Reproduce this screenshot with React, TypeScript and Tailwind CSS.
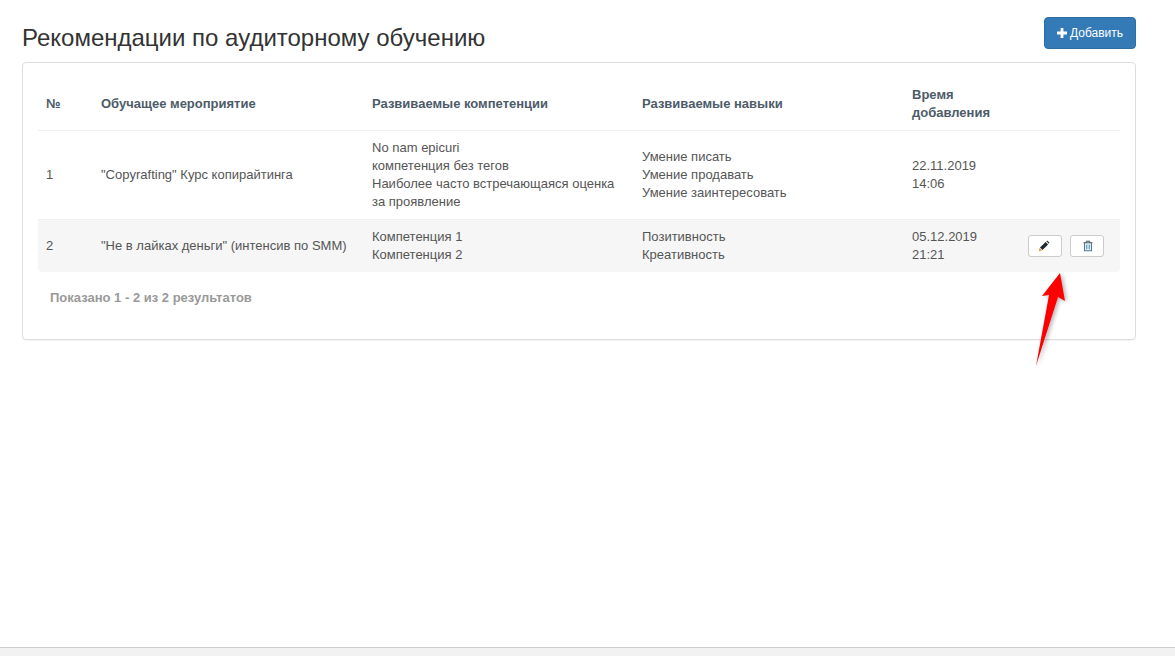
import React from "react";

function Pencil() {
  return (
    <svg className="mr-[3px]" width="12" height="12" viewBox="0 0 12 12">
      <path d="M0.8 11.2 L1.5 8 L4 10.5 Z" fill="#d99a2b" />
      <path d="M2 7.5 L7.6 1.9 L10.1 4.4 L4.5 10 Z" fill="#1f2a33" />
      <path d="M8.3 1.2 L9.2 0.5 L11.5 2.8 L10.8 3.7 Z" fill="#27333d" />
    </svg>
  );
}

function Trash() {
  return (
    <svg className="ml-[1px]" width="12" height="12" viewBox="0 0 12 12" fill="none">
      <path d="M1.5 2.8 H10.5 M4.3 2.8 V1.2 H7.7 V2.8" stroke="#46525c" strokeWidth="1" />
      <path d="M2.6 3 V10.8 H9.4 V3" stroke="#4b7894" strokeWidth="1.1" />
      <path d="M4.5 4.5 V9.4 M6 4.5 V9.4 M7.5 4.5 V9.4" stroke="#5f9fc0" strokeWidth="0.9" />
    </svg>
  );
}

const th = "font-bold text-[#4d5b69] text-[13px] leading-[18px] px-2 text-left align-middle";
const td = "text-[#555] text-[13px] leading-[18px] px-2 align-middle";

export default function App() {
  return (
    <div className="relative h-[656px] bg-white overflow-hidden flex flex-col font-['Liberation_Sans',Arial,sans-serif]">
      <div className="flex-1 pl-[22px] w-[1136px]">
        <div className="flex justify-between items-start h-[62px]">
          <h1 className="text-[24px] leading-[26px] text-[#333] mt-[25px]">Рекомендации по аудиторному обучению</h1>
          <button className="mt-[17px] w-[92px] h-[32px] bg-[#337ab7] border border-[#2e6da4] rounded text-white text-[12px] flex items-center justify-center gap-[3px]">
            <svg width="10" height="10" viewBox="0 0 10 10"><path d="M3.6 0 H6.4 V3.6 H10 V6.4 H6.4 V10 H3.6 V6.4 H0 V3.6 H3.6 Z" fill="#fff" /></svg>
            Добавить
          </button>
        </div>
        <div className="h-[278px] border border-[#ddd] rounded shadow-[0_1px_1px_rgba(0,0,0,0.05)] px-[15px] pt-[15px]">
          <table className="w-[1082px] table-fixed border-collapse">
            <colgroup>
              <col className="w-[55px]" />
              <col className="w-[271px]" />
              <col className="w-[270px]" />
              <col className="w-[270px]" />
              <col className="w-[116px]" />
              <col />
            </colgroup>
            <thead>
              <tr className="h-[52px] border-b border-[#ecf0f1]">
                <th className={th}>№</th>
                <th className={th}>Обучащее мероприятие</th>
                <th className={th}>Развиваемые компетенции</th>
                <th className={th}>Развиваемые навыки</th>
                <th className={th}>Время добавления</th>
                <th />
              </tr>
            </thead>
            <tbody>
              <tr className="h-[89px] border-b border-[#ecf0f1]">
                <td className={td}>1</td>
                <td className={td}>"Copyrafting" Курс копирайтинга</td>
                <td className={td}>
                  <div>No nam epicuri</div>
                  <div>компетенция без тегов</div>
                  <div>Наиболее часто встречающаяся оценка за проявление</div>
                </td>
                <td className={td}>
                  <div>Умение писать</div>
                  <div>Умение продавать</div>
                  <div>Умение заинтересовать</div>
                </td>
                <td className={td}>
                  <div>22.11.2019</div>
                  <div>14:06</div>
                </td>
                <td />
              </tr>
              <tr className="h-[53px] bg-[#f6f6f6]">
                <td className={`${td} rounded-bl`}>2</td>
                <td className={`${td} whitespace-nowrap`}>"Не в лайках деньги" (интенсив по SMM)</td>
                <td className={td}>
                  <div>Компетенция 1</div>
                  <div>Компетенция 2</div>
                </td>
                <td className={td}>
                  <div>Позитивность</div>
                  <div>Креативность</div>
                </td>
                <td className={td}>
                  <div>05.12.2019</div>
                  <div>21:21</div>
                </td>
                <td className="align-middle rounded-br">
                  <div className="flex gap-2 pl-2">
                    <button className="w-[34px] h-[22px] bg-white border border-[#ccc] rounded-[3px] flex items-center justify-center"><Pencil /></button>
                    <button className="w-[34px] h-[22px] bg-white border border-[#ccc] rounded-[3px] flex items-center justify-center"><Trash /></button>
                  </div>
                </td>
              </tr>
            </tbody>
          </table>
          <div className="mt-[17px] pl-3 text-[13px] leading-[18px] font-bold text-[#999]">Показано 1 - 2 из 2 результатов</div>
        </div>
      </div>
      <div className="h-[9px] border-t border-[#ccc] bg-[#f2f2f2]" />
      <svg className="absolute left-[1030px] top-[268px]" width="40" height="100" viewBox="0 0 40 100">
        <defs>
          <filter id="s" x="-50%" y="-50%" width="200%" height="200%"><feGaussianBlur stdDeviation="2" /></filter>
        </defs>
        <path d="M30 5 L12 28 L19 27 L6 98 L28 29 L35 33 Z" fill="#000" opacity="0.3" filter="url(#s)" transform="translate(2,1)" />
        <path d="M30 5 L12 28 L19 27 L6 98 L28 29 L35 33 Z" fill="#fe0000" />
      </svg>
    </div>
  );
}
